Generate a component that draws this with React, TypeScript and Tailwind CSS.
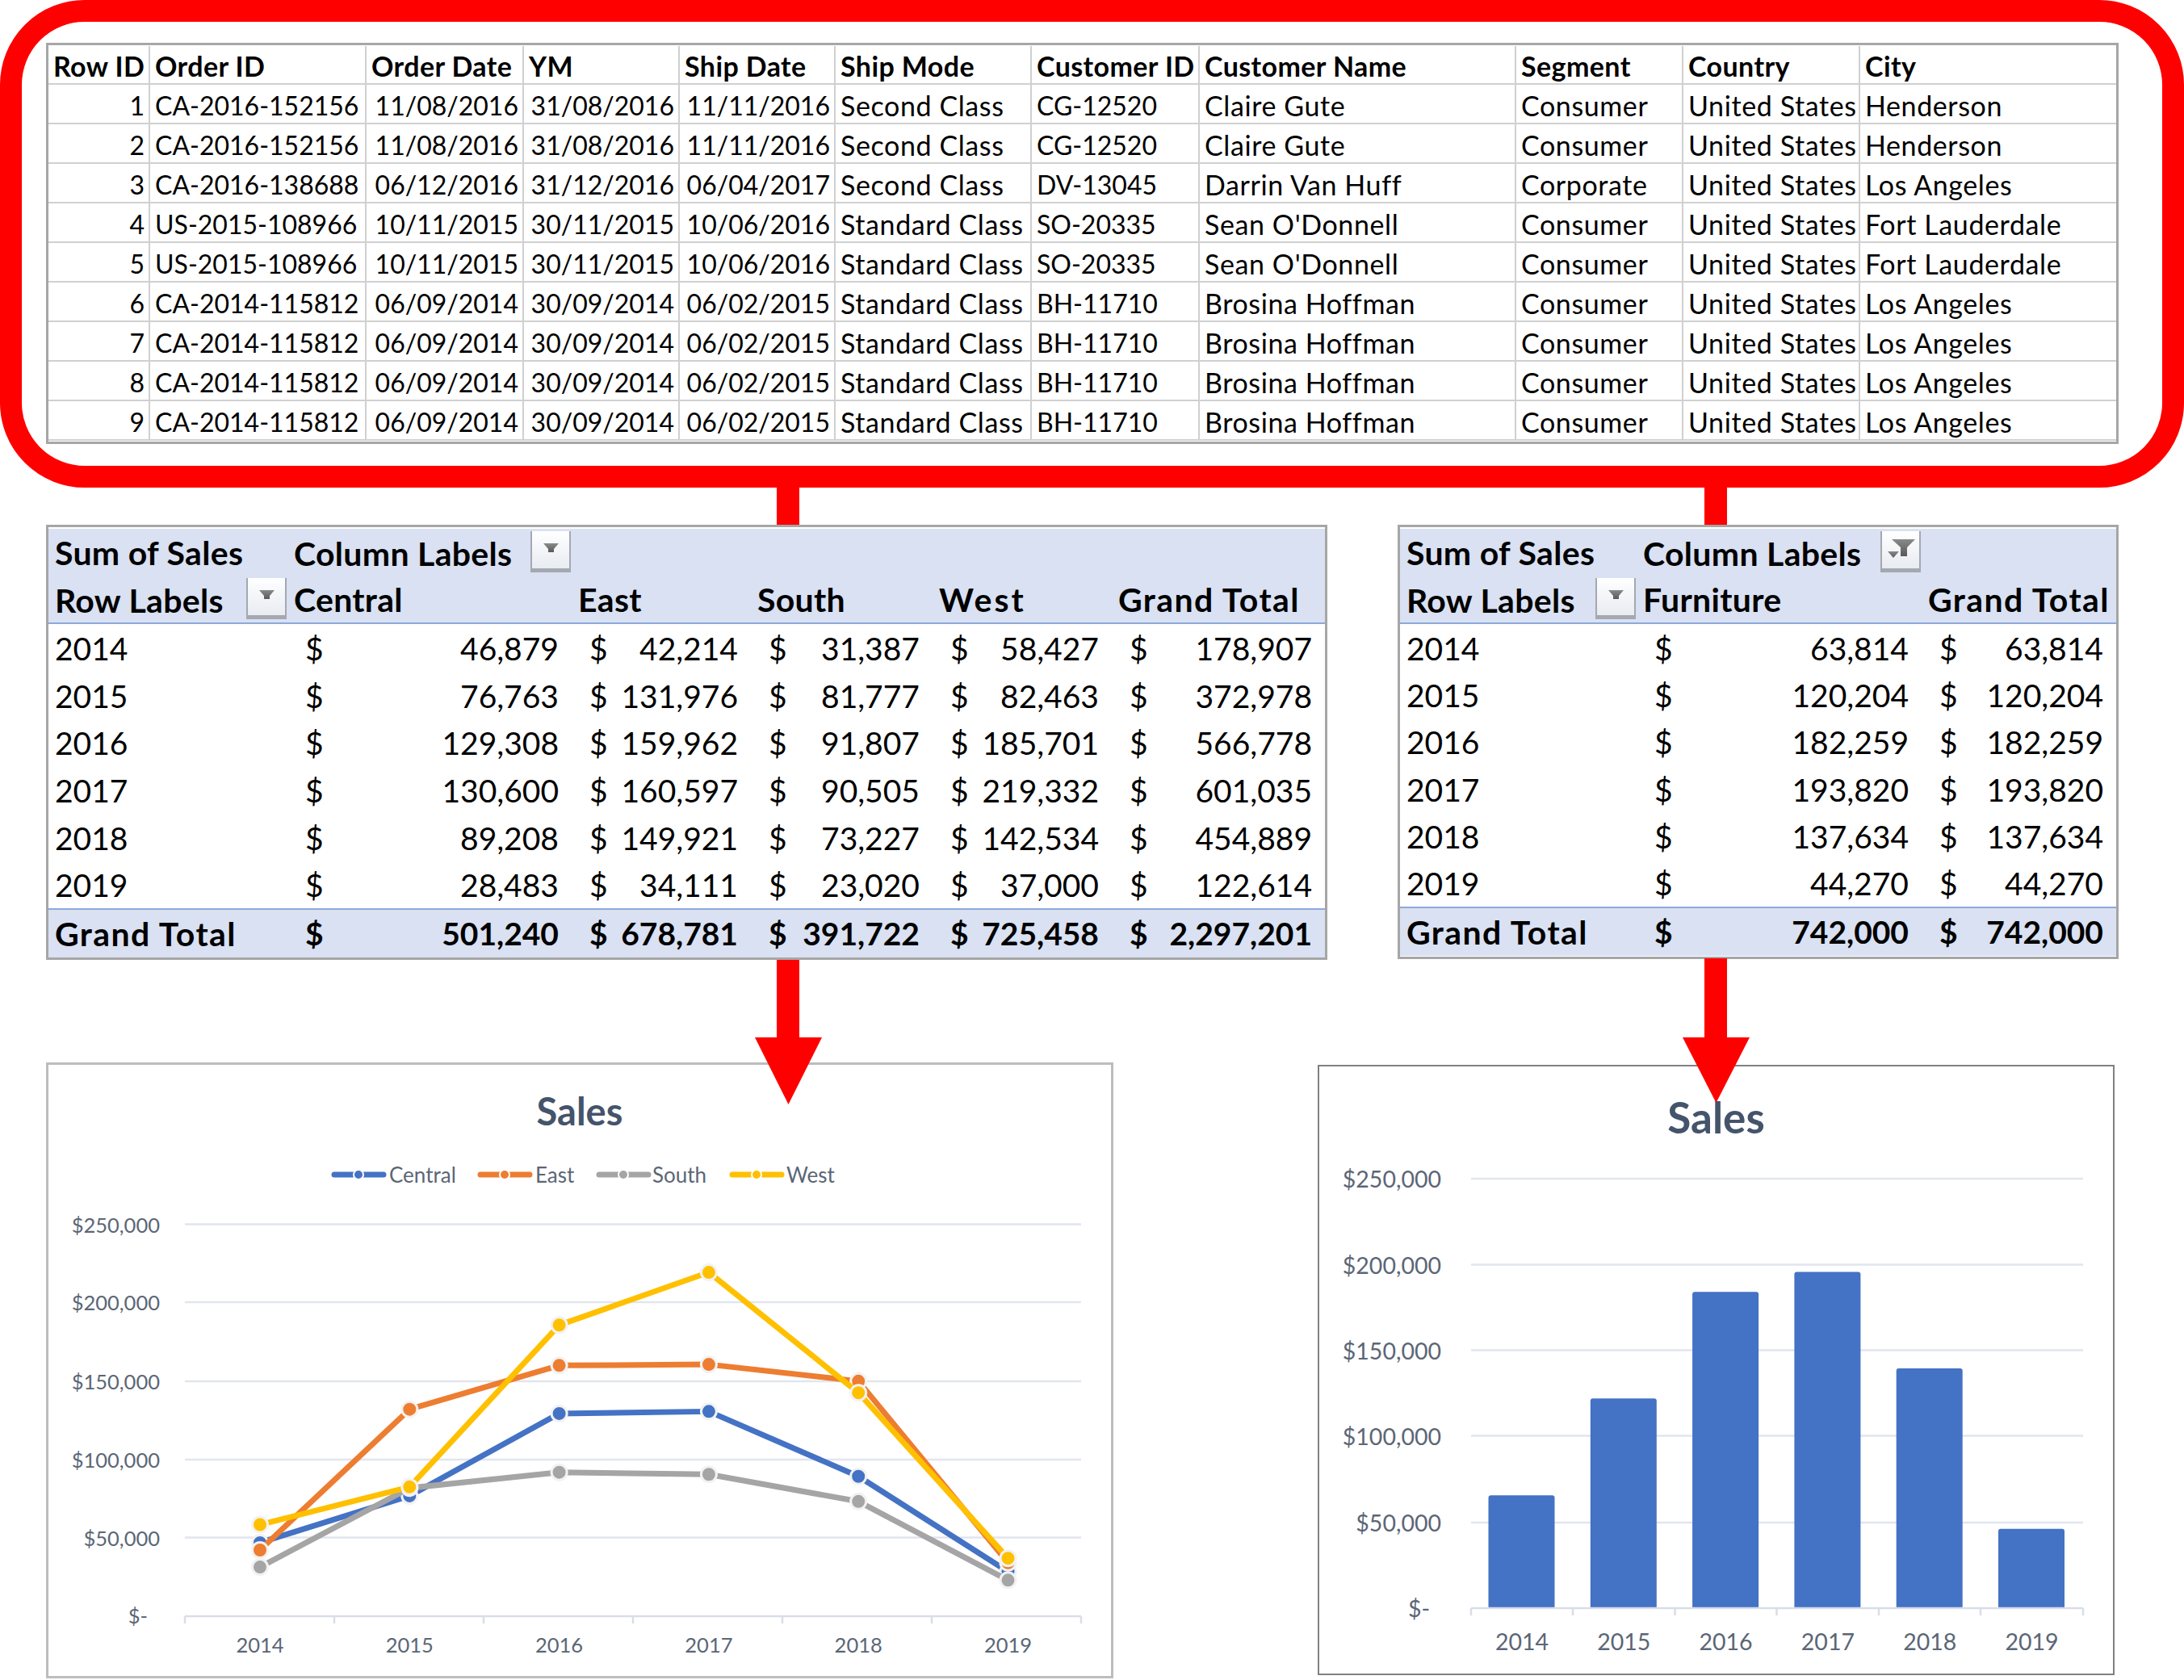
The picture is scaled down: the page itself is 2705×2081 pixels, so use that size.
const ORDERS = [
  ['1', 'CA-2016-152156', '11/08/2016', '31/08/2016', '11/11/2016', 'Second Class', 'CG-12520', 'Claire Gute', 'Consumer', 'United States', 'Henderson'],
  ['2', 'CA-2016-152156', '11/08/2016', '31/08/2016', '11/11/2016', 'Second Class', 'CG-12520', 'Claire Gute', 'Consumer', 'United States', 'Henderson'],
  ['3', 'CA-2016-138688', '06/12/2016', '31/12/2016', '06/04/2017', 'Second Class', 'DV-13045', 'Darrin Van Huff', 'Corporate', 'United States', 'Los Angeles'],
  ['4', 'US-2015-108966', '10/11/2015', '30/11/2015', '10/06/2016', 'Standard Class', 'SO-20335', "Sean O'Donnell", 'Consumer', 'United States', 'Fort Lauderdale'],
  ['5', 'US-2015-108966', '10/11/2015', '30/11/2015', '10/06/2016', 'Standard Class', 'SO-20335', "Sean O'Donnell", 'Consumer', 'United States', 'Fort Lauderdale'],
  ['6', 'CA-2014-115812', '06/09/2014', '30/09/2014', '06/02/2015', 'Standard Class', 'BH-11710', 'Brosina Hoffman', 'Consumer', 'United States', 'Los Angeles'],
  ['7', 'CA-2014-115812', '06/09/2014', '30/09/2014', '06/02/2015', 'Standard Class', 'BH-11710', 'Brosina Hoffman', 'Consumer', 'United States', 'Los Angeles'],
  ['8', 'CA-2014-115812', '06/09/2014', '30/09/2014', '06/02/2015', 'Standard Class', 'BH-11710', 'Brosina Hoffman', 'Consumer', 'United States', 'Los Angeles'],
  ['9', 'CA-2014-115812', '06/09/2014', '30/09/2014', '06/02/2015', 'Standard Class', 'BH-11710', 'Brosina Hoffman', 'Consumer', 'United States', 'Los Angeles'],
];
const HEADERS = ['Row ID', 'Order ID', 'Order Date', 'YM', 'Ship Date', 'Ship Mode', 'Customer ID', 'Customer Name', 'Segment', 'Country', 'City'];
const RIGHT_ALIGNED = [0, 2, 3, 4];
// plain words run wider than digits in the original font
const WORD_COLUMNS = [5, 7, 8, 9, 10];

const YEARS = ['2014', '2015', '2016', '2017', '2018', '2019'];
const REGION_SALES = [
  ['46,879', '42,214', '31,387', '58,427', '178,907'],
  ['76,763', '131,976', '81,777', '82,463', '372,978'],
  ['129,308', '159,962', '91,807', '185,701', '566,778'],
  ['130,600', '160,597', '90,505', '219,332', '601,035'],
  ['89,208', '149,921', '73,227', '142,534', '454,889'],
  ['28,483', '34,111', '23,020', '37,000', '122,614'],
];
const REGION_TOTAL = ['501,240', '678,781', '391,722', '725,458', '2,297,201'];
const FURNITURE_SALES = [
  ['63,814', '63,814'],
  ['120,204', '120,204'],
  ['182,259', '182,259'],
  ['193,820', '193,820'],
  ['137,634', '137,634'],
  ['44,270', '44,270'],
];

const SERIES = [
  { name: 'Central', color: '#4472c4', values: [46879, 76763, 129308, 130600, 89208, 28483] },
  { name: 'East', color: '#ed7d31', values: [42214, 131976, 159962, 160597, 149921, 34111] },
  { name: 'South', color: '#a5a5a5', values: [31387, 81777, 91807, 90505, 73227, 23020] },
  { name: 'West', color: '#ffc000', values: [58427, 82463, 185701, 219332, 142534, 37000] },
];
const AXIS_LABELS = ['$250,000', '$200,000', '$150,000', '$100,000', '$50,000'];
const LEGEND = [
  { x: 411, textX: 482 },
  { x: 592, textX: 663 },
  { x: 739, textX: 808 },
  { x: 904, textX: 974 },
];
const FURNITURE_VALUES = [63814, 120204, 182259, 193820, 137634, 44270];

function labelTracking(text: string) {
  if (text === 'Grand Total') return 'tracking-[1.4px]';
  if (text === 'West') return 'tracking-[3px]';
  return 'tracking-[0.3px]';
}

function OrdersTable() {
  return (
    <div className="ml-[30px] mt-[26px] w-[2567px] border-[3px] border-[#a6a6a6] py-px text-[32px] leading-none">
      <div className="grid h-[48px] grid-cols-[126px_268px_195px_193px_193px_243px_208px_392px_207px_219px_1fr] text-[34px] font-bold">
        {HEADERS.map(h => (
          <div key={h} className="flex items-center whitespace-nowrap border-b-2 border-r-2 border-[#d0d0d0] pl-[6px] pt-[3px] tracking-[0.4px] last:border-r-0">
            {h}
          </div>
        ))}
      </div>
      {ORDERS.map(row => (
        <div key={row[0]} className="grid h-[49px] grid-cols-[126px_268px_195px_193px_193px_243px_208px_392px_207px_219px_1fr]">
          {row.map((cell, i) => (
            <div
              key={i}
              className={`flex items-center whitespace-nowrap border-b-2 border-r-2 border-[#d0d0d0] pt-[4px] last:border-r-0 ${
                RIGHT_ALIGNED.includes(i) ? 'justify-end pr-[5px]' : 'pl-[6px]'
              } ${WORD_COLUMNS.includes(i) ? 'text-[34px] tracking-[0.6px]' : ''}`}
            >
              {cell}
            </div>
          ))}
        </div>
      ))}
    </div>
  );
}

function FilterButton({ funnel = false }: { funnel?: boolean }) {
  return (
    <div className="h-[51px] w-[50px] shrink-0 border-x-2 border-b-[5px] border-[#a4a8b0] bg-linear-to-b from-white to-[#e8ebf1]">
      <svg viewBox="0 0 46 46" className="block h-[46px] w-[46px]" fill="url(#filterFill)">
        <defs>
          <linearGradient id="filterFill" x1="0" y1="0" x2="0" y2="1">
            <stop offset="0" stopColor="#8a8a8a" />
            <stop offset="1" stopColor="#595959" />
          </linearGradient>
        </defs>
        {funnel ? (
          <>
            <polygon points="12,10 41,10 31,20 31,31 23,31 23,20" />
            <polygon points="7,25 21,25 14,33" />
          </>
        ) : (
          <polygon points="14,15 33,15 27,22 27,26 20,26 20,22" />
        )}
      </svg>
    </div>
  );
}

function Money({ value }: { value: string }) {
  return (
    <div className="flex items-center justify-between pl-[22px] pr-[16px]">
      <span>$</span>
      <span>{value}</span>
    </div>
  );
}

type PivotProps = {
  cols: string;
  rowClass: string;
  className: string;
  headers: string[];
  funnel?: boolean;
  rows: string[][];
  totals: string[];
};

function Pivot({ cols, rowClass, className, headers, funnel, rows, totals }: PivotProps) {
  return (
    <div className={`border-[3px] border-[#a6a6a6] pt-[2px] text-[39px] leading-none ${className}`}>
      <div className="bg-[#d9e1f2] text-[41px] font-bold">
        <div className={`grid h-[58px] items-center ${cols}`}>
          <div className="pl-[8px] tracking-[0.3px]">Sum of Sales</div>
          <div className="flex h-full items-start justify-between pl-[8px] pr-px pt-[3px]">
            <span className="self-center tracking-[0.3px]">Column Labels</span>
            <FilterButton funnel={funnel} />
          </div>
        </div>
        <div className={`box-content grid h-[58px] items-center border-b-2 border-[#8ea9db] ${cols}`}>
          <div className="flex h-full items-start justify-between pl-[8px] pr-px pt-[3px]">
            <span className="self-center tracking-[0.3px]">Row Labels</span>
            <FilterButton />
          </div>
          {headers.map(h => (
            <div key={h} className={`pl-[8px] ${labelTracking(h)}`}>{h}</div>
          ))}
        </div>
      </div>
      {rows.map((row, i) => (
        <div key={YEARS[i]} className={`grid items-center pt-[2px] ${cols} ${rowClass}`}>
          <div className="pl-[8px]">{YEARS[i]}</div>
          {row.map((v, j) => (
            <Money key={j} value={v} />
          ))}
        </div>
      ))}
      <div className={`box-content grid h-[59px] items-center border-t-2 border-[#8ea9db] bg-[#d9e1f2] font-bold ${cols}`}>
        <div className="pl-[8px] text-[41px] tracking-[1.4px]">Grand Total</div>
        {totals.map((v, j) => (
          <Money key={j} value={v} />
        ))}
      </div>
    </div>
  );
}

// sales line chart, drawn in page coordinates so the numbers read off the picture directly
function LineChart() {
  const ticks = [229, 414, 599, 784, 969, 1154, 1339];
  const gridY = [1516.5, 1613, 1711, 1808, 1904.5];
  const px = (i: number) => 322 + i * 185.3;
  const py = (v: number) => 2002 - (v / 250000) * 485.5;
  return (
    <div className="h-[763px] w-[1322px] border-[3px] border-[#bdbdbd]">
      <svg viewBox="60 1319 1316 757" className="block h-full w-full">
        <text x={718} y={1376} textAnchor="middle" dominantBaseline="central" fontSize={47} fontWeight={700} fill="#44546a">Sales</text>
        {SERIES.map((s, i) => (
          <g key={s.name}>
            <line x1={LEGEND[i].x + 3} x2={LEGEND[i].x + 64} y1={1455} y2={1455} stroke={s.color} strokeWidth={7} strokeLinecap="round" />
            <circle cx={LEGEND[i].x + 33} cy={1455} r={6} fill={s.color} stroke="#fff" strokeWidth={2} />
            <text x={LEGEND[i].textX} y={1455} dominantBaseline="central" fontSize={26} fill="#5b6676">{s.name}</text>
          </g>
        ))}
        {gridY.map((y, i) => (
          <g key={y}>
            <line x1={229} x2={1339} y1={y} y2={y} stroke="#e1e5ee" strokeWidth={2.5} />
            <text x={198} y={y} textAnchor="end" dominantBaseline="central" fontSize={25.5} fill="#5b6676">{AXIS_LABELS[i]}</text>
          </g>
        ))}
        <line x1={229} x2={1339} y1={2002} y2={2002} stroke="#d9dde8" strokeWidth={2.5} />
        {ticks.map(x => (
          <line key={x} x1={x} x2={x} y1={2002} y2={2011} stroke="#d9dde8" strokeWidth={2.5} />
        ))}
        <text x={183} y={2001} textAnchor="end" dominantBaseline="central" fontSize={25.5} fill="#5b6676">$-</text>
        {YEARS.map((y, i) => (
          <text key={y} x={px(i)} y={2037} textAnchor="middle" dominantBaseline="central" fontSize={25.5} fill="#5b6676">{y}</text>
        ))}
        {SERIES.map(s => (
          <g key={s.name}>
            <polyline
              points={s.values.map((v, i) => `${px(i)},${py(v)}`).join(' ')}
              fill="none"
              stroke={s.color}
              strokeWidth={7}
              strokeLinejoin="round"
              strokeLinecap="round"
            />
            {s.values.map((v, i) => (
              <circle key={i} cx={px(i)} cy={py(v)} r={9.5} fill={s.color} stroke="#f2f2f2" strokeWidth={3} />
            ))}
          </g>
        ))}
      </svg>
    </div>
  );
}

function BarChart() {
  const gridY = [1460, 1566.5, 1672.5, 1778.5, 1886];
  const ticks = [1822, 1948, 2074.5, 2200.5, 2327, 2453, 2580];
  return (
    <div className="ml-[253px] mt-[3px] h-[756px] w-[987px] border-2 border-[#808080]">
      <svg viewBox="1634 1321 983 752" className="block h-full w-full">
        <text x={2125.5} y={1383} textAnchor="middle" dominantBaseline="central" fontSize={53} fontWeight={700} fill="#44546a">Sales</text>
        {gridY.map((y, i) => (
          <g key={y}>
            <line x1={1822} x2={2580} y1={y} y2={y} stroke="#e1e5ee" strokeWidth={2.5} />
            <text x={1785} y={y} textAnchor="end" dominantBaseline="central" fontSize={28.5} fill="#5b6676">{AXIS_LABELS[i]}</text>
          </g>
        ))}
        <text x={1771} y={1992} textAnchor="end" dominantBaseline="central" fontSize={28.5} fill="#5b6676">$-</text>
        {FURNITURE_VALUES.map((v, i) => {
          const top = 1988 - (v / 250000) * 532;
          return <path key={i} d={`M${1843.5 + i * 126.3} 1991 V${top + 3} q0 -3 3 -3 H${1843.5 + i * 126.3 + 79} q3 0 3 3 V1991 Z`} fill="#4472c4" />;
        })}
        <line x1={1822} x2={2580} y1={1992} y2={1992} stroke="#d9dde8" strokeWidth={2.5} />
        {ticks.map(x => (
          <line key={x} x1={x} x2={x} y1={1992} y2={2001} stroke="#d9dde8" strokeWidth={2.5} />
        ))}
        {YEARS.map((y, i) => (
          <text key={y} x={1885 + i * 126.3} y={2033} textAnchor="middle" dominantBaseline="central" fontSize={28.5} fill="#5b6676">{y}</text>
        ))}
      </svg>
    </div>
  );
}

export default function App() {
  return (
    <div className="relative h-[2081px] w-[2705px] overflow-hidden bg-white text-black [font-family:Lato,sans-serif]">
      <div className="h-[604px] rounded-[105px] border-[27px] border-[#ff0000]">
        <OrdersTable />
      </div>

      <div className="mt-[46px] flex items-start pl-[57px]">
        <Pivot
          className="h-[539px] w-[1587px]"
          cols="grid-cols-[296px_352px_222px_225px_222px_1fr]"
          rowClass="h-[58.7px]"
          headers={['Central', 'East', 'South', 'West', 'Grand Total']}
          rows={REGION_SALES}
          totals={REGION_TOTAL}
        />
        <Pivot
          className="ml-[87px] h-[538px] w-[893px]"
          cols="grid-cols-[293px_353px_1fr]"
          rowClass="h-[58.3px]"
          headers={['Furniture', 'Grand Total']}
          funnel
          rows={FURNITURE_SALES}
          totals={['742,000', '742,000']}
        />
      </div>

      <div className="mt-[127px] flex items-start pl-[57px]">
        <LineChart />
        <BarChart />
      </div>

      {/* red connectors sit on top of the tables and charts */}
      <div className="absolute left-[962px] top-[604px] h-[46px] w-[28px] bg-[#ff0000]" />
      <div className="absolute left-[2111px] top-[604px] h-[46px] w-[28px] bg-[#ff0000]" />
      <svg viewBox="0 0 83 179" className="absolute left-[935px] top-[1189px] h-[179px] w-[83px]">
        <polygon points="27,0 55,0 55,96 83,96 41.5,179 0,96 27,96" fill="#ff0000" />
      </svg>
      <svg viewBox="0 0 83 179" className="absolute left-[2084px] top-[1187px] h-[179px] w-[83px]">
        <polygon points="27,0 55,0 55,98 83,98 41.5,179 0,98 27,98" fill="#ff0000" />
      </svg>
    </div>
  );
}
